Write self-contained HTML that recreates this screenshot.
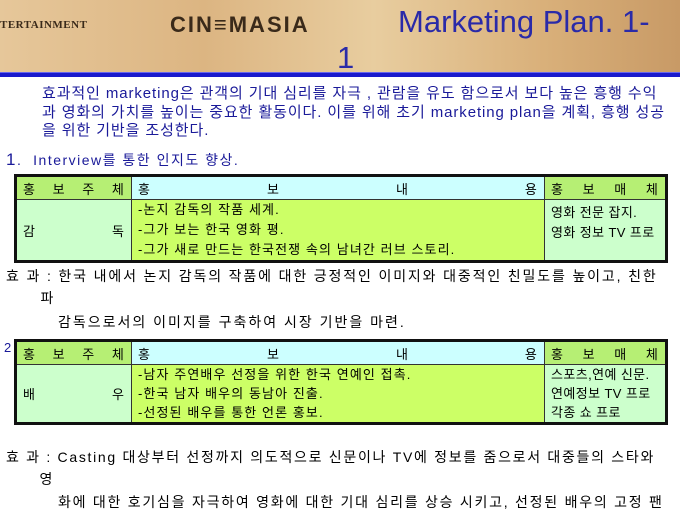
<!DOCTYPE html>
<html><head><meta charset="utf-8"><style>
*{margin:0;padding:0;box-sizing:border-box}
body{width:680px;height:510px;background:#fff;position:relative;overflow:hidden;font-family:"Liberation Sans","Noto Sans CJK KR","NanumGothic",sans-serif;color:#000}
.hdr{position:absolute;left:0;top:0;width:680px;height:72px;background:linear-gradient(90deg,#e6c79a 0%,#dcb582 30%,#e8cd9f 55%,#d9b07a 80%,#c89a66 100%)}
.line{position:absolute;left:0;top:72px;width:680px;height:5px;background:#1a1acc;border-top:1px solid #6666ee}
.a{position:absolute;white-space:nowrap}
table{position:absolute;left:14px;width:654px;border-collapse:collapse;border:3px solid #111;font-size:13px;letter-spacing:1.1px}
td{border:1px solid #333;padding:0 6px;vertical-align:middle}
.hg{background:#b6ef74}.hc{background:#ccffff}.bg{background:#ccffcc}.by{background:#ccff66}
.sp{display:flex;justify-content:space-between}
</style></head><body>
<div class="hdr"></div>
<div class="a" style="left:0;top:19px;font-family:'Liberation Serif',serif;font-weight:bold;font-size:11px;color:#3a2a1a;letter-spacing:0.5px">TERTAINMENT</div>
<div class="a" style="left:170px;top:12px;font-size:22px;font-weight:bold;color:#3a2a1a;letter-spacing:2px">CIN≡MASIA</div>
<div class="a" style="left:398px;top:4px;font-size:31px;color:#2a2aa8">Marketing Plan. 1-</div>
<div class="a" style="left:337px;top:40px;font-size:31px;color:#2a2aa8">1</div>
<div class="line"></div>
<div class="a" style="left:42px;top:85px;font-size:15px;letter-spacing:0.9px;line-height:18.5px;color:#1a1a99">효과적인 marketing은 관객의 기대 심리를 자극 , 관람을 유도 함으로서 보다 높은 흥행 수익<br>과 영화의 가치를 높이는 중요한 활동이다. 이를 위해 초기 marketing plan을 계획, 흥행 성공<br>을 위한 기반을 조성한다.</div>
<div class="a" style="left:6px;top:150px;font-size:14px;letter-spacing:1.5px;color:#1a1a99"><span style="font-size:17px">1</span>.&nbsp; Interview를 통한 인지도 향상.</div>
<table style="top:174px;height:89px">
<tr style="height:24px"><td class="hg" style="width:116px"><div class="sp"><span>홍</span><span>보</span><span>주</span><span>체</span></div></td><td class="hc"><div class="sp"><span>홍</span><span>보</span><span>내</span><span>용</span></div></td><td class="hg" style="width:122px"><div class="sp"><span>홍</span><span>보</span><span>매</span><span>체</span></div></td></tr>
<tr><td class="bg"><div class="sp"><span>감</span><span>독</span></div></td><td class="by" style="line-height:20px">-논지 감독의 작품 세계.<br>-그가 보는 한국 영화 평.<br>-그가 새로 만드는 한국전쟁 속의 남녀간 러브 스토리.</td><td class="bg" style="vertical-align:top;line-height:20px;padding-top:3px;letter-spacing:0.4px;white-space:nowrap">영화 전문 잡지.<br>영화 정보 TV 프로</td></tr>
</table>
<div class="a" style="left:6px;top:265px;font-size:14px;letter-spacing:1.85px;line-height:22px">효 과 : 한국 내에서 논지 감독의 작품에 대한 긍정적인 이미지와 대중적인 친밀도를 높이고, 친한<br>&nbsp;&nbsp;&nbsp;&nbsp;&nbsp;&nbsp;파</div>
<div class="a" style="left:58px;top:312px;font-size:14px;letter-spacing:2px">감독으로서의 이미지를 구축하여 시장 기반을 마련.</div>
<div class="a" style="left:4px;top:340px;font-size:13px;color:#1a1a99">2</div>
<table style="top:339px;height:82px">
<tr style="height:24px"><td class="hg" style="width:116px"><div class="sp"><span>홍</span><span>보</span><span>주</span><span>체</span></div></td><td class="hc"><div class="sp"><span>홍</span><span>보</span><span>내</span><span>용</span></div></td><td class="hg" style="width:122px"><div class="sp"><span>홍</span><span>보</span><span>매</span><span>체</span></div></td></tr>
<tr><td class="bg"><div class="sp"><span>배</span><span>우</span></div></td><td class="by" style="line-height:19px">-남자 주연배우 선정을 위한 한국 연예인 접촉.<br>-한국 남자 배우의 동남아 진출.<br>-선정된 배우를 통한 언론 홍보.</td><td class="bg" style="line-height:19px;letter-spacing:0.4px;white-space:nowrap">스포츠,연예 신문.<br>연예정보 TV 프로<br>각종 쇼 프로</td></tr>
</table>
<div class="a" style="left:6px;top:446px;font-size:14px;letter-spacing:1.7px;line-height:22px">효 과 : Casting 대상부터 선정까지 의도적으로 신문이나 TV에 정보를 줌으로서 대중들의 스타와<br>&nbsp;&nbsp;&nbsp;&nbsp;&nbsp;&nbsp;영</div>
<div class="a" style="left:58px;top:492px;font-size:14px;letter-spacing:1.75px">화에 대한 호기심을 자극하여 영화에 대한 기대 심리를 상승 시키고, 선정된 배우의 고정 팬</div>
</body></html>
